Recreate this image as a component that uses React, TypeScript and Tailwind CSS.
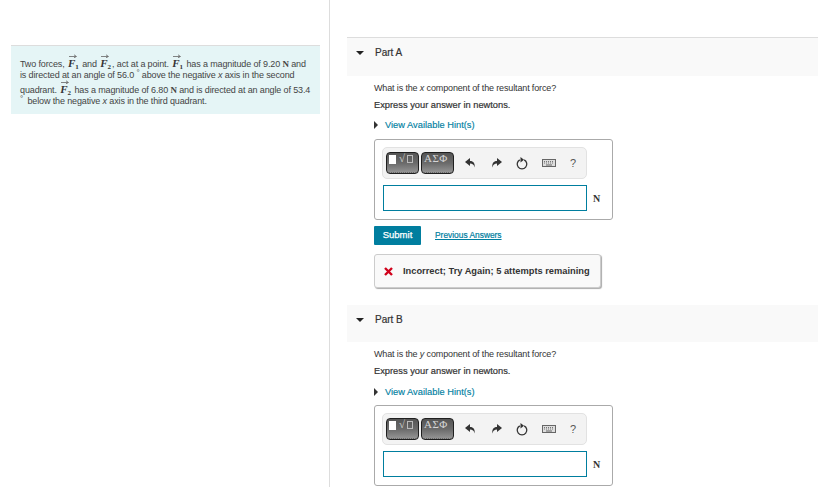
const sans = { fontFamily: '"Liberation Sans", Arial, sans-serif' };

function Vec({ n }: { n: string }) {
  return (
    <span className="relative mx-[1px] inline-block font-['Liberation_Serif'] text-[11px] font-bold italic leading-[10px] tracking-normal text-[#333]">
      <svg className="absolute left-[1px] top-[-4px]" width="8" height="4" viewBox="0 0 8 4">
        <path d="M0 2.500H7M5 .8 7.500 2.500 5 3.800" fill="none" stroke="#666" strokeWidth="0.800" />
      </svg>
      F<span className="relative top-[2px] text-[7px] not-italic">{n}</span>
    </span>
  );
}

function Palette({ kind }: { kind: 'math' | 'greek' }) {
  return (
    <div className="relative h-[22px] w-[33px] overflow-hidden rounded-[4px] border border-[#1f1f1f] bg-gradient-to-b from-[#555555] via-[#6a6a6a] to-[#979797] pl-[2px] font-['Liberation_Serif'] text-[11px] leading-[11px] text-[#d5d5d5]">
      {kind === 'math' ? (
        <div className="flex items-start gap-[2px]">
          <span className="mt-[2px] h-[9px] w-[7px] bg-white" />
          <span className="ml-[1px]">√</span>
          <span className="mt-[2px] h-[8px] w-[6px] border border-[#bbb]" />
        </div>
      ) : (
        <span className="tracking-[0.500px]">ΑΣΦ</span>
      )}
      <div className="absolute bottom-0 left-[2px] right-[2px] h-[2px] border-b border-dotted border-[#666]" />
    </div>
  );
}

function Toolbar() {
  return (
    <div className="flex h-[32px] w-[205px] items-center rounded-[5px] border border-[#e2e2e2] bg-[#f3f3f3] pl-[3px]">
      <div className="flex gap-[2px]">
        <Palette kind="math" />
        <Palette kind="greek" />
      </div>
      <svg className="ml-[11px]" width="11" height="10" viewBox="0 0 11 10">
        <path d="M5 0 0 4l5 4V5.500c2.500 0 4 1 4.500 4 .8-4-1-6.500-4.500-6.500Z" fill="#333" />
      </svg>
      <svg className="ml-[15px]" width="11" height="10" viewBox="0 0 11 10">
        <path d="M6 0l5 4-5 4V5.500c-2.500 0-4 1-4.500 4-.8-4 1-6.500 4.500-6.500Z" fill="#333" />
      </svg>
      <svg className="ml-[14px]" width="12" height="13" viewBox="0 0 12 13">
        <path d="M3.800 2.900a4.800 4.800 0 1 0 4.400 0" fill="none" stroke="#333" strokeWidth="1.300" />
        <path d="M4.500 0v5.500L8 2.700Z" fill="#333" />
      </svg>
      <svg className="ml-[14px]" width="14" height="8" viewBox="0 0 14 8">
        <rect x="0.500" y="0.500" width="13" height="7" fill="#ddd" stroke="#666" />
        <path d="M2 2.500h10M2 4h10" stroke="#777" strokeDasharray="1 1" />
        <path d="M4 6h6" stroke="#666" />
      </svg>
      <span className="ml-[14px] text-[11px] text-[#555]">?</span>
    </div>
  );
}

function AnswerBox() {
  return (
    <div className="ml-[374px] flex h-[81px] w-[239px] flex-col gap-[6px] rounded-[3px] border border-[#aaa] px-[7px] pt-[7px]">
      <Toolbar />
      <div className="flex items-center">
        <div className="ml-[1px] h-[26px] w-[204px] border border-[#007e9f] bg-white" />
        <span className="ml-[6px] font-['Liberation_Serif'] text-[10px] font-bold text-[#333]">N</span>
      </div>
    </div>
  );
}

function PartHead({ label, tall }: { label: string; tall?: boolean }) {
  return (
    <div className={`ml-[347px] flex items-start bg-[#f9f9f9] ${tall ? 'h-[39px] border-t border-[#ddd] pt-[9px]' : 'h-[37px] pt-[9px]'}`}>
      <span className="ml-[9px] mt-[4px] h-0 w-0 border-x-[4px] border-t-[4px] border-x-transparent border-t-[#222]" />
      <span className="ml-[11px] text-[10px] leading-[12px] text-[#333] [-webkit-text-stroke:0.200px_#333]">{label}</span>
    </div>
  );
}

function Prompt({ axis, hintGap }: { axis: string; hintGap: string }) {
  return (
    <div className="ml-[374px] text-[#333]">
      <p className="text-[9px] leading-[12px] tracking-[-0.140px]">
        What is the <i>{axis}</i> component of the resultant force?
      </p>
      <p className="mt-[5px] text-[9.300px] leading-[12px] [-webkit-text-stroke:0.200px_#333]">Express your answer in newtons.</p>
      <div className={`${hintGap} flex items-center text-[9.300px] leading-[12px] text-[#007e9f] [-webkit-text-stroke:0.150px_#007e9f]`}>
        <span className="h-0 w-0 border-y-[4px] border-l-[4px] border-y-transparent border-l-[#333]" />
        <span className="ml-[7px]">View Available Hint(s)</span>
      </div>
    </div>
  );
}

export default function App() {
  return (
    <div className="relative h-[487px] w-[818px] overflow-hidden bg-white" style={sans}>
      {/* column divider */}
      <div className="absolute bottom-0 left-[329px] top-0 w-px bg-[#ddd]" />

      {/* Problem statement */}
      <div className="absolute left-[11px] top-[45px] h-[69px] w-[309px] border-t border-[#ddd] bg-[#e5f5f6] pl-[9px] pt-[12px] text-[9px] leading-[10px] tracking-[-0.130px] text-[#444]">
        <div className="whitespace-nowrap">
          Two forces, <Vec n="1" /> and <Vec n="2" />, act at a point. <Vec n="1" /> has a magnitude of 9.20 <b className="font-['Liberation_Serif']">N</b> and
        </div>
        <div className="whitespace-nowrap">
          is directed at an angle of 56.0 <span className="relative top-[-3px] text-[8px] leading-none">°</span> above the negative <i>x</i> axis in the second
        </div>
        <div className="mt-[4px] whitespace-nowrap">
          quadrant. <Vec n="2" /> has a magnitude of 6.80 <b className="font-['Liberation_Serif']">N</b> and is directed at an angle of 53.4
        </div>
        <div className="whitespace-nowrap">
          <span className="relative top-[-3px] text-[8px] leading-none">°</span><span className="ml-[2px]"> below the negative <i>x</i> axis in the third quadrant.</span>
        </div>
      </div>

      <div className="flex flex-col pt-[37px]">
        <PartHead label="Part A" tall />
        <div className="h-[6px]" />
        <Prompt axis="x" hintGap="mt-[8px]" />
        <div className="h-[8px]" />
        <AnswerBox />
        <div className="ml-[374px] mt-[6px] flex items-center">
          <span className="flex h-[19px] w-[47px] items-center justify-center rounded-[1px] bg-[#007e9f] text-[9.500px] text-white [-webkit-text-stroke:0.250px_#fff]">Submit</span>
          <span className="ml-[14px] text-[8.400px] text-[#007e9f] underline [-webkit-text-stroke:0.200px_#007e9f]">Previous Answers</span>
        </div>
        <div className="ml-[374px] mt-[9px] flex h-[34px] w-[227px] items-center rounded-[3px] border border-[#ccc] bg-[#f9f9f9] pl-[9px] pt-[1px] shadow-[1px_1px_1px_#aaa]">
          <svg width="9" height="9" viewBox="0 0 9 9">
            <path d="M1 1l7 7M8 1 1 8" stroke="#d0021b" strokeWidth="2.400" />
          </svg>
          <span className="ml-[10px] whitespace-nowrap text-[9.300px] font-bold text-[#333]">Incorrect; Try Again; 5 attempts remaining</span>
        </div>
        <div className="h-[17px]" />
        <PartHead label="Part B" />
        <div className="h-[6px]" />
        <Prompt axis="y" hintGap="mt-[9px]" />
        <div className="h-[7px]" />
        <AnswerBox />
      </div>
    </div>
  );
}
